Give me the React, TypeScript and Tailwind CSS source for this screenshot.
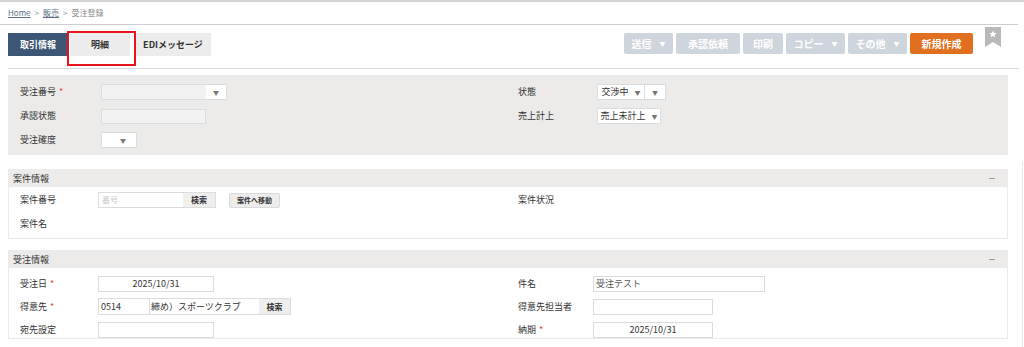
import React from "react";

const font = { fontFamily: '"Noto Sans CJK JP", "Noto Sans", sans-serif' };

function Caret({ className = "" }: { className?: string }) {
  return <span className={"text-[6px] text-[#777] " + className}>▼</span>;
}

function Req() {
  return <span className="text-[#e0442a] ml-[3px]">*</span>;
}

function GrayButton({ label, caret, width }: { label: string; caret?: boolean; width: string }) {
  return (
    <button
      className={
        "h-[21px] flex items-center justify-center gap-[8px] rounded-[2px] bg-[#cfd5dc] text-white text-[10px] font-bold " +
        width
      }
    >
      {label}
      {caret && <span className="text-[6px]">▼</span>}
    </button>
  );
}

function SectionHeader({ title }: { title: string }) {
  return (
    <div className="h-[17px] bg-[#ecebe9] flex items-center justify-between px-[4px] text-[9px] text-[#333]">
      <span>{title}</span>
      <span className="w-[6px] h-[1px] bg-[#999] mr-[8px]" />
    </div>
  );
}

export default function App() {
  return (
    <div
      style={font}
      className="relative w-[1024px] h-[347px] overflow-hidden bg-white border-t-2 border-[#d4d4d4] text-[#333]"
    >
      {/* breadcrumb */}
      <div className="h-[23px] flex items-center pl-[8px] mr-[6px] border-b border-[#cfcfcf] text-[8px] text-[#8a8a8a] gap-[4px]">
        <span className="underline text-[#5d6f86]">Home</span>
        <span>&gt;</span>
        <span className="underline text-[#5d6f86]">販売</span>
        <span>&gt;</span>
        <span>受注登録</span>
      </div>

      {/* toolbar */}
      <div className="flex items-start justify-between pr-[18px] pt-[8px] h-[44px] border-b border-[#d6d6d6] mr-[5px] ml-[8px]">
        <div className="flex gap-[2px]">
          <div className="h-[23px] w-[60px] flex items-center justify-center bg-[#3e5675] text-white text-[9px] font-bold">
            取引情報
          </div>
          <div className="h-[23px] w-[60px] flex items-center justify-center bg-[#ececec] text-[#333] text-[9px] font-bold">
            明細
          </div>
          <div className="h-[23px] w-[76px] flex items-center justify-center bg-[#ececec] text-[#333] text-[9px] font-bold ml-[3px]">
            EDIメッセージ
          </div>
        </div>
        <div className="flex items-start gap-[3px]">
          <GrayButton label="送信" caret width="w-[49px]" />
          <GrayButton label="承認依頼" width="w-[64px]" />
          <GrayButton label="印刷" width="w-[40px]" />
          <GrayButton label="コピー" caret width="w-[59px]" />
          <GrayButton label="その他" caret width="w-[59px]" />
          <button className="h-[21px] w-[63px] rounded-[2px] bg-[#e0701f] text-white text-[10px] font-bold">
            新規作成
          </button>
          <svg width="16" height="20" viewBox="0 0 16 20" className="ml-[9px] -mt-[6px]">
            <path d="M0 0H16V20L8 15L0 20Z" fill="#b9b9b9" />
            <path d="M8 3.5l1.1 2.4 2.5.2-1.9 1.7.6 2.5L8 9l-2.3 1.3.6-2.5-1.9-1.7 2.5-.2z" fill="#fff" />
          </svg>
        </div>
      </div>

      {/* basic section */}
      <div className="mt-[6px] ml-[8px] w-[1000px] h-[80px] bg-[#ecebea] flex pt-[9px] text-[9px]">
        <div className="w-[498px] pl-[12px] flex flex-col gap-[8px]">
          <div className="flex items-center h-[16px]">
            <span className="w-[81px]">
              受注番号
              <Req />
            </span>
            <div className="flex h-[16px] border border-[#dcdcdc]">
              <div className="w-[104px] bg-[#f2f2f2]" />
              <div className="w-[20px] bg-white flex items-center justify-center">
                <Caret />
              </div>
            </div>
          </div>
          <div className="flex items-center h-[16px]">
            <span className="w-[81px]">承認状態</span>
            <div className="w-[105px] h-[15px] bg-[#f2f2f2] border border-[#dcdcdc]" />
          </div>
          <div className="flex items-center h-[16px]">
            <span className="w-[81px]">受注確度</span>
            <div className="w-[36px] h-[16px] bg-white border border-[#dcdcdc] flex items-center justify-end pr-[10px]">
              <Caret />
            </div>
          </div>
        </div>
        <div className="pl-[12px] flex flex-col gap-[8px]">
          <div className="flex items-center h-[16px]">
            <span className="w-[79px]">状態</span>
            <div className="h-[16px] w-[48px] bg-white border border-[#dcdcdc] flex items-center justify-center gap-[6px]">
              交渉中 <Caret />
            </div>
            <div className="h-[16px] w-[21px] bg-white border border-[#dcdcdc] border-l-0 flex items-center justify-center">
              <Caret />
            </div>
          </div>
          <div className="flex items-center h-[16px]">
            <span className="w-[79px]">売上計上</span>
            <div className="h-[16px] w-[64px] bg-white border border-[#dcdcdc] flex items-center justify-center gap-[6px]">
              売上未計上 <Caret />
            </div>
          </div>
        </div>
      </div>

      {/* 案件情報 */}
      <div className="mt-[14px] ml-[8px] w-[1000px] border border-[#ebebeb] text-[9px]">
        <SectionHeader title="案件情報" />
        <div className="flex pt-[5px] h-[51px]">
          <div className="w-[498px] pl-[11px] flex flex-col gap-[8px]">
            <div className="flex items-center h-[16px]">
              <span className="w-[78px]">案件番号</span>
              <div className="flex h-[16px] border border-[#dcdcdc]">
                <div className="w-[84px] pl-[3px] flex items-center text-[8px] text-[#c8c8c8]">番号</div>
                <div className="w-[32px] bg-[#efefef] flex items-center justify-center text-[8px] font-bold">検索</div>
              </div>
              <div className="ml-[13px] h-[15px] px-[7px] bg-[#ececec] border border-[#dadada] rounded-[2px] flex items-center text-[7px] font-bold">
                案件へ移動
              </div>
            </div>
            <div className="flex items-center h-[16px]">
              <span>案件名</span>
            </div>
          </div>
          <div className="pl-[11px]">
            <div className="flex items-center h-[16px]">
              <span>案件状況</span>
            </div>
          </div>
        </div>
      </div>

      {/* 受注情報 */}
      <div className="mt-[11px] ml-[8px] w-[1000px] border border-[#ebebeb] text-[9px]">
        <SectionHeader title="受注情報" />
        <div className="flex pt-[7px]">
          <div className="w-[498px] pl-[11px] flex flex-col gap-[6px]">
            <div className="flex items-center h-[17px]">
              <span className="w-[78px]">
                受注日
                <Req />
              </span>
              <div className="w-[116px] h-[16px] border border-[#dcdcdc] flex items-center justify-center">2025/10/31</div>
            </div>
            <div className="flex items-center h-[17px]">
              <span className="w-[78px]">
                得意先
                <Req />
              </span>
              <div className="flex h-[17px] border border-[#dcdcdc]">
                <div className="w-[51px] pl-[2px] flex items-center border-r border-[#dcdcdc]">0514</div>
                <div className="w-[109px] pl-[1px] flex items-center">締め）スポーツクラブ</div>
                <div className="w-[31px] bg-[#efefef] flex items-center justify-center text-[8px] font-bold">検索</div>
              </div>
            </div>
            <div className="flex items-center h-[17px]">
              <span className="w-[78px]">宛先設定</span>
              <div className="w-[116px] h-[16px] border border-[#dcdcdc]" />
            </div>
          </div>
          <div className="pl-[11px] flex flex-col gap-[6px]">
            <div className="flex items-center h-[17px]">
              <span className="w-[75px]">件名</span>
              <div className="w-[172px] h-[16px] border border-[#dcdcdc] flex items-center pl-[2px] text-[#555]">受注テスト</div>
            </div>
            <div className="flex items-center h-[17px]">
              <span className="w-[75px]">得意先担当者</span>
              <div className="w-[120px] h-[16px] border border-[#dcdcdc]" />
            </div>
            <div className="flex items-center h-[17px]">
              <span className="w-[75px]">
                納期
                <Req />
              </span>
              <div className="w-[120px] h-[16px] border border-[#dcdcdc] flex items-center justify-center">2025/10/31</div>
            </div>
          </div>
        </div>
      </div>

      {/* annotation box */}
      <div className="absolute left-[67px] top-[29px] w-[69px] h-[35px] border-2 border-[#e8141c]" />
      <div className="absolute right-[1px] top-[160px] w-px h-[190px] bg-[#e6e6e6]" />
    </div>
  );
}
